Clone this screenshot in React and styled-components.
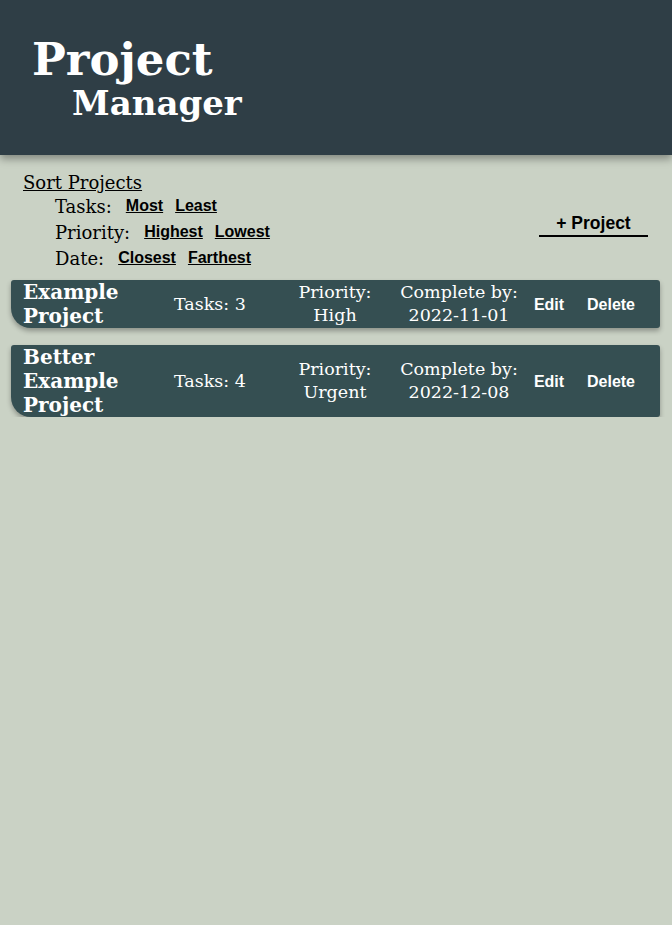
import React from 'react';
import styled, { createGlobalStyle } from 'styled-components';

const GlobalStyle = createGlobalStyle`
    * { box-sizing: border-box; }
    html, body {
        margin: 0;
        padding: 0;
        background-color: #cad2c5;
        font-family: "DejaVu Serif", "Liberation Serif", serif;
    }
`;

const Header = styled.header`
    height: 155px;
    background-color: #2f3e46;
    box-shadow: 0 4px 8px rgba(0, 0, 0, 0.35);
    padding: 37px 0 0 32px;
    color: white;
    h1 {
        margin: 0;
        font-weight: bold;
        line-height: 1;
        .top {
            display: block;
            font-size: 45px;
        }
        .bottom {
            display: block;
            font-size: 34px;
            padding-left: 40px;
            margin-top: 4px;
        }
    }
`;

const Toolbar = styled.div`
    display: flex;
    justify-content: space-between;
    align-items: flex-end;
    padding: 17px 24px 9px 23px;
`;

const SortBox = styled.div`
    .title {
        font-size: 18px;
        text-decoration: underline;
        margin-bottom: 0;
    }
`;

const SortRow = styled.div`
    display: flex;
    align-items: center;
    gap: 12px;
    height: 26px;
    padding-left: 32px;
    font-size: 18px;
    span {
        margin-right: 2px;
    }
`;

const SortLink = styled.a`
    font-family: "Liberation Sans", Arial, sans-serif;
    font-weight: bold;
    font-size: 16px;
    color: black;
    text-decoration: underline;
    cursor: pointer;
`;

const AddButton = styled.button`
    width: 109px;
    margin-bottom: 34px;
    background: transparent;
    border: none;
    border-bottom: 2px solid black;
    font-family: "Liberation Sans", Arial, sans-serif;
    font-weight: bold;
    font-size: 17.5px;
    padding: 0 0 1px;
    color: black;
    cursor: pointer;
`;

const List = styled.div`
    display: flex;
    flex-direction: column;
    gap: 17px;
    padding: 0 12px 0 11px;
`;

const Card = styled.div`
    display: grid;
    grid-template-columns: 124px 126px 124px 124px 56px 68px;
    align-items: center;
    padding: 0 15px 0 12px;
    background-color: #354f52;
    color: white;
    border-radius: 3px 3px 3px 20px;
    box-shadow: 0 3px 5px rgba(0, 0, 0, 0.3);
    font-size: 17.5px;
    line-height: 23px;
`;

const Name = styled.div`
    font-weight: bold;
    font-size: 20px;
    line-height: 24px;
`;

const Cell = styled.div`
    text-align: center;
`;

const Action = styled.button`
    background: transparent;
    border: none;
    color: white;
    font-family: "Liberation Sans", Arial, sans-serif;
    font-weight: bold;
    font-size: 16px;
    padding: 0;
    cursor: pointer;
`;

const projects = [
    { name: 'Example Project', tasks: 3, priority: 'High', date: '2022-11-01' },
    { name: 'Better Example Project', tasks: 4, priority: 'Urgent', date: '2022-12-08' },
];

const App = () => {
    return (
        <>
            <GlobalStyle />
            <Header>
                <h1>
                    <span className="top">Project</span>
                    <span className="bottom">Manager</span>
                </h1>
            </Header>
            <Toolbar>
                <SortBox>
                    <div className="title">Sort Projects</div>
                    <SortRow>
                        <span>Tasks:</span>
                        <SortLink>Most</SortLink>
                        <SortLink>Least</SortLink>
                    </SortRow>
                    <SortRow>
                        <span>Priority:</span>
                        <SortLink>Highest</SortLink>
                        <SortLink>Lowest</SortLink>
                    </SortRow>
                    <SortRow>
                        <span>Date:</span>
                        <SortLink>Closest</SortLink>
                        <SortLink>Farthest</SortLink>
                    </SortRow>
                </SortBox>
                <AddButton>+ Project</AddButton>
            </Toolbar>
            <List>
                {projects.map((p) => (
                    <Card key={p.name}>
                        <Name>{p.name}</Name>
                        <Cell>Tasks: {p.tasks}</Cell>
                        <Cell>Priority:<br />{p.priority}</Cell>
                        <Cell>Complete by:<br />{p.date}</Cell>
                        <Cell><Action>Edit</Action></Cell>
                        <Cell><Action>Delete</Action></Cell>
                    </Card>
                ))}
            </List>
        </>
    );
};

export default App;
